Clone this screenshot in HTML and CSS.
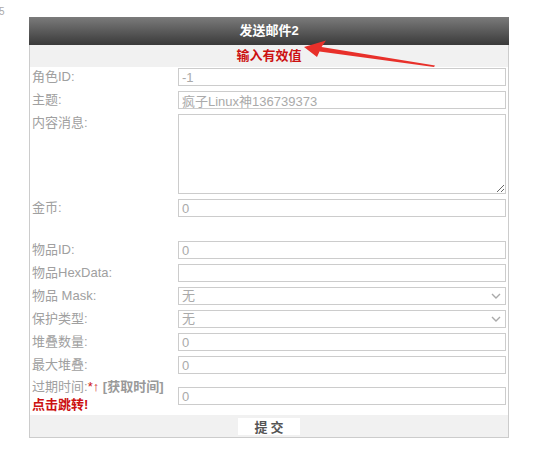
FILE: index.html
```html
<!DOCTYPE html>
<html lang="zh-CN">
<head>
    <meta charset="UTF-8">
    <title>发送邮件2</title>
    <link rel="stylesheet" href="styles.css">
</head>
<body>
    <div class="top-note">5</div>

    <div class="panel">
        <div class="panel-head">发送邮件2</div>
        <div class="panel-msg">输入有效值</div>

        <svg class="mark-arrow" width="140" height="32" viewBox="0 0 140 32">
            <polygon points="4,8 26,1.5 21.5,8 135,26.5 134,28 19.5,12.5 17,18" fill="#e8302a"/>
        </svg>

        <div class="row">
            <div class="label">角色ID:</div>
            <div class="field"><input type="text" value="-1"></div>
        </div>
        <div class="row">
            <div class="label">主题:</div>
            <div class="field"><input type="text" value="疯子Linux神136739373"></div>
        </div>
        <div class="row row-text">
            <div class="label">内容消息:</div>
            <div class="field"><textarea></textarea></div>
        </div>
        <div class="row">
            <div class="label">金币:</div>
            <div class="field"><input type="text" value="0"></div>
        </div>
        <div class="row-blank"></div>
        <div class="row">
            <div class="label">物品ID:</div>
            <div class="field"><input type="text" value="0"></div>
        </div>
        <div class="row">
            <div class="label">物品HexData:</div>
            <div class="field"><input type="text" value=""></div>
        </div>
        <div class="row">
            <div class="label">物品 Mask:</div>
            <div class="field select-box">
                <select><option>无</option></select>
                <svg class="chevron" width="10" height="6" viewBox="0 0 10 6"><path d="M1 1 L5 5 L9 1" fill="none" stroke="#aaa" stroke-width="1.4"/></svg>
            </div>
        </div>
        <div class="row">
            <div class="label">保护类型:</div>
            <div class="field select-box">
                <select><option>无</option></select>
                <svg class="chevron" width="10" height="6" viewBox="0 0 10 6"><path d="M1 1 L5 5 L9 1" fill="none" stroke="#aaa" stroke-width="1.4"/></svg>
            </div>
        </div>
        <div class="row">
            <div class="label">堆叠数量:</div>
            <div class="field"><input type="text" value="0"></div>
        </div>
        <div class="row">
            <div class="label">最大堆叠:</div>
            <div class="field"><input type="text" value="0"></div>
        </div>
        <div class="row row-expire">
            <div class="label">过期时间:<span class="red">*↑</span> <b>[获取时间]</b><br><b class="red">点击跳转!</b></div>
            <div class="field"><input type="text" value="0"></div>
        </div>

        <div class="panel-foot">
            <button type="button">提交</button>
        </div>
    </div>
</body>
</html>
```

FILE: styles.css
```css
*
{
    box-sizing: border-box;
}

body
{
    margin: 0;
    font-family: "Liberation Sans", "Noto Sans CJK SC", sans-serif;
    font-size: 13px;
    color: #a0a0a0;
    background: #fff;
}

.top-note
{
    height: 17px;
    font-size: 10px;
    line-height: 24px;
    margin-left: -1px;
    color: #aaa;
}

.panel
{
    position: relative;
    width: 480px;
    margin: 0 auto;
    border: 1px solid #ccc;
    border-top: none;
}

.panel-head
{
    height: 28px;
    line-height: 28px;
    text-align: center;
    color: #fff;
    font-weight: bold;
    background: linear-gradient(#7b7b7b, #3a3a3a);
    margin: 0 -1px;
}

.panel-msg
{
    height: 22px;
    line-height: 22px;
    text-align: center;
    color: #cc1111;
    font-weight: bold;
    background: #f1f1f1;
}

.mark-arrow
{
    position: absolute;
    left: 270px;
    top: 22px;
}

.row
{
    display: flex;
    align-items: flex-start;
    padding: 1px 0 4px;
}

.label
{
    width: 148px;
    padding-left: 2px;
    line-height: 18px;
}

.field
{
    flex: 1;
    padding-right: 2px;
}

.field input,
.field select,
.field textarea
{
    display: block;
    width: 100%;
    height: 18px;
    border: 1px solid #ccc;
    padding: 0 3px;
    font-family: inherit;
    font-size: 13px;
    color: #aaa;
    background: #fff;
    outline: none;
}

.field textarea
{
    height: 80px;
    resize: both;
}

.select-box
{
    position: relative;
}

.field select
{
    appearance: none;
    -webkit-appearance: none;
    border-radius: 0;
    line-height: 16px;
}

.chevron
{
    position: absolute;
    right: 7px;
    top: 6px;
}

.row-blank
{
    height: 19px;
}

.row-expire
{
    align-items: center;
    padding: 0 0 1px;
}

.row-expire b
{
    color: #999;
}

.red,
.row-expire .red
{
    color: #cc1111;
}

.panel-foot
{
    height: 22px;
    background: #f1f1f1;
    display: flex;
    justify-content: center;
    align-items: center;
}

.panel-foot button
{
    width: 62px;
    height: 17px;
    border: none;
    background: #fff;
    font-family: "Noto Sans CJK SC", sans-serif;
    font-weight: bold;
    font-size: 13px;
    color: #555;
    letter-spacing: 3px;
    padding: 0 0 0 3px;
    line-height: 17px;
}
```
